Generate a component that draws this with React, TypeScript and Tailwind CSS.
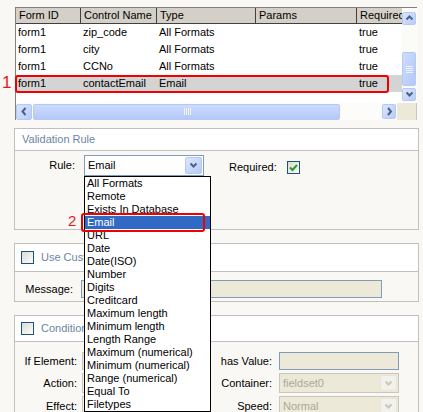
import React from "react";

const FONT = "font-['Liberation_Sans',Arial,sans-serif]";

type Dir = "up" | "down" | "left" | "right";

const chevrons: Record<Dir, string> = {
  up: "M1.5 5.5 L4.5 2.5 L7.5 5.5",
  down: "M1.5 2.5 L4.5 5.5 L7.5 2.5",
  left: "M5.5 1 L2.5 4.5 L5.5 8",
  right: "M3 1 L6 4.5 L3 8",
};

function Chevron({ dir, color = "#4d6185" }: { dir: Dir; color?: string }) {
  return (
    <svg width="9" height="9" viewBox="0 0 9 9">
      <path d={chevrons[dir]} fill="none" stroke={color} strokeWidth="2" />
    </svg>
  );
}

function ScrollButton({ dir, className = "" }: { dir: Dir; className?: string }) {
  return (
    <div
      className={`flex items-center justify-center rounded-[2px] border border-[#b6c8f3] bg-gradient-to-br from-[#dbe6fd] to-[#b8ccf8] ${className}`}
    >
      <Chevron dir={dir} />
    </div>
  );
}

function Grip({ vertical }: { vertical?: boolean }) {
  return (
    <div className={`flex ${vertical ? "flex-col gap-[1px]" : "gap-[1px]"}`}>
      {[0, 1, 2, 3].map((i) => (
        <div
          key={i}
          className={vertical ? "h-[1px] w-[7px] bg-[#eef3fe]" : "h-[7px] w-[1px] bg-[#eef3fe]"}
        />
      ))}
    </div>
  );
}

function Checkbox({ checked }: { checked?: boolean }) {
  return (
    <div className="flex h-[13px] w-[13px] items-center justify-center border border-[#1c5180] bg-gradient-to-br from-[#dcdcd7] to-[#fbfbf9]">
      {checked ? (
        <svg width="9" height="9" viewBox="0 0 9 9">
          <path d="M1 4.5 L3.5 7 L8 2" fill="none" stroke="#21a121" strokeWidth="2" />
        </svg>
      ) : null}
    </div>
  );
}

function ComboArrow({ disabled }: { disabled?: boolean }) {
  return (
    <div
      className={`flex w-[17px] items-center justify-center rounded-[2px] border ${
        disabled
          ? "border-[#e6e4dc] bg-[#f2f1ec]"
          : "border-[#b6c8f3] bg-gradient-to-br from-[#dbe6fd] to-[#b8ccf8]"
      }`}
    >
      <Chevron dir="down" color={disabled ? "#c9c7ba" : "#4d6185"} />
    </div>
  );
}

const columns = [
  { label: "Form ID", w: "w-[65px]" },
  { label: "Control Name", w: "w-[76px]" },
  { label: "Type", w: "w-[99px]" },
  { label: "Params", w: "w-[101px]" },
  { label: "Required", w: "w-[80px]" },
];

const rows = [
  ["form1", "zip_code", "All Formats", "", "true"],
  ["form1", "city", "All Formats", "", "true"],
  ["form1", "CCNo", "All Formats", "", "true"],
  ["form1", "contactEmail", "Email", "", "true"],
];

const rules = [
  "All Formats",
  "Remote",
  "Exists In Database",
  "Email",
  "URL",
  "Date",
  "Date(ISO)",
  "Number",
  "Digits",
  "Creditcard",
  "Maximum length",
  "Minimum length",
  "Length Range",
  "Maximum (numerical)",
  "Minimum (numerical)",
  "Range (numerical)",
  "Equal To",
  "Filetypes",
];

function Section({
  title,
  check,
  headerH,
  bodyH,
  children,
}: {
  title: string;
  check?: boolean;
  headerH: string;
  bodyH: string;
  children: React.ReactNode;
}) {
  return (
    <div className="ml-[14px] w-[405px] border border-[#c0c0c0]">
      <div className={`flex ${headerH} items-center border-b border-[#c0c0c0] bg-white ${check ? "pl-[6px]" : "pl-[7px]"}`}>
        {check ? (
          <div className="mr-[7px]">
            <Checkbox />
          </div>
        ) : null}
        <span className="text-[#6b84a6]">{title}</span>
      </div>
      <div className={bodyH}>{children}</div>
    </div>
  );
}

export default function App() {
  return (
    <div className={`relative h-[412px] w-[423px] overflow-hidden bg-[#f9f8f4] pt-[7px] text-[11px] text-black ${FONT}`}>
      {/* grid */}
      <div className="ml-[15px] w-[402px] border-l border-t border-[#808080] bg-white">
        <div className="flex h-[95px]">
          <div className="w-[386px] overflow-hidden">
            <div className="flex h-[16px] border-b border-[#404040] bg-[#d4d0c8]">
              {columns.map((c) => (
                <div
                  key={c.label}
                  className={`${c.w} shrink-0 overflow-hidden whitespace-nowrap border-r border-[#404040] pl-[3px] leading-[15px]`}
                >
                  {c.label}
                </div>
              ))}
            </div>
            {rows.map((r, i) => (
              <div key={i} className={`flex h-[17px] items-center ${i === 3 ? "bg-[#d4d4d4]" : ""}`}>
                {r.map((cell, j) => (
                  <div
                    key={j}
                    className={`${columns[j].w} shrink-0 overflow-hidden whitespace-nowrap pl-[2px]`}
                  >
                    {cell}
                  </div>
                ))}
              </div>
            ))}
          </div>
          {/* vertical scrollbar */}
          <div className="flex w-[15px] flex-col bg-[#fbfbf8] pt-[4px]">
            <ScrollButton dir="up" className="h-[13px] w-[14px]" />
            <div className="h-[27px]" />
            <div className="flex h-[34px] w-[14px] items-center justify-center rounded-[2px] border border-[#b6c8f3] bg-gradient-to-br from-[#cddcfd] to-[#b4c8f7]">
              <Grip vertical />
            </div>
            <div className="h-[2px]" />
            <ScrollButton dir="down" className="h-[13px] w-[14px]" />
          </div>
        </div>
        {/* horizontal scrollbar */}
        <div className="flex h-[17px] items-center bg-[#fcfcfa]">
          <ScrollButton dir="left" className="h-[16px] w-[16px]" />
          <div className="ml-[1px] flex h-[16px] w-[307px] items-center justify-end rounded-[2px] border border-[#b6c8f3] bg-gradient-to-b from-[#cddcfd] to-[#b4c8f7] pr-[148px]">
            <Grip />
          </div>
          <div className="w-[42px]" />
          <ScrollButton dir="right" className="h-[15px] w-[14px]" />
          <div className="ml-[1px] h-[17px] w-[20px] border-r border-[#c8c5bb] bg-[#ece9d8]" />
        </div>
      </div>

      {/* validation rule */}
      <div className="mt-[8px]">
        <Section title="Validation Rule" headerH="h-[22px]" bodyH="h-[78px]">
          <div className="flex items-center pt-[4px]">
            <div className="w-[60px] text-right">Rule:</div>
            <div className="ml-[9px] flex h-[21px] w-[120px] border border-[#7f9db9] bg-white p-[1px]">
              <div className="flex-1 pl-[2px] leading-[17px]">Email</div>
              <ComboArrow />
            </div>
            <div className="ml-[25px] mt-[4px]">Required:</div>
            <div className="ml-[10px] mt-[4px]">
              <Checkbox checked />
            </div>
          </div>
        </Section>
      </div>

      {/* custom message */}
      <div className="mt-[13px]">
        <Section title="Use Custom Message" check headerH="h-[28px]" bodyH="h-[29px]">
          <div className="flex items-center pt-[8px]">
            <div className="w-[58px] text-right">Message:</div>
            <div className="ml-[8px] h-[18px] w-[301px] border border-[#7f9db9] bg-[#ece9d8]" />
          </div>
        </Section>
      </div>

      {/* conditional */}
      <div className="mt-[13px]">
        <Section title="Conditional Validation" check headerH="h-[26px]" bodyH="h-[80px]">
          <div className="flex flex-col gap-[3px] pt-[10px]">
            <div className="flex h-[18px] items-center">
              <div className="w-[62px] text-right">If Element:</div>
              <div className="ml-[5px] h-[18px] w-[118px] border border-[#c9c7ba] bg-[#ece9d8]" />
              <div className="w-[72px] text-right">has Value:</div>
              <div className="ml-[7px] h-[18px] w-[120px] border border-[#7f9db9] bg-[#ece9d8]" />
            </div>
            <div className="flex h-[20px] items-center">
              <div className="w-[62px] text-right">Action:</div>
              <div className="ml-[5px] h-[20px] w-[118px] border border-[#c9c7ba] bg-[#f4f3ee]" />
              <div className="w-[72px] text-right">Container:</div>
              <div className="ml-[7px] flex h-[20px] w-[120px] border border-[#c9c7ba] bg-[#ece9d8] p-[1px]">
                <div className="flex-1 pl-[2px] leading-[16px] text-[#aca899]">fieldset0</div>
                <ComboArrow disabled />
              </div>
            </div>
            <div className="flex h-[20px] items-center">
              <div className="w-[62px] text-right">Effect:</div>
              <div className="ml-[5px] h-[20px] w-[118px] border border-[#c9c7ba] bg-[#f4f3ee]" />
              <div className="w-[72px] text-right">Speed:</div>
              <div className="ml-[7px] flex h-[20px] w-[120px] border border-[#c9c7ba] bg-[#ece9d8] p-[1px]">
                <div className="flex-1 pl-[2px] leading-[16px] text-[#aca899]">Normal</div>
                <ComboArrow disabled />
              </div>
            </div>
          </div>
        </Section>
      </div>

      {/* open dropdown list */}
      <div className="absolute left-[84px] top-[176px] w-[127px] border border-black bg-white">
        {rules.map((r) => (
          <div
            key={r}
            className={`h-[13px] whitespace-nowrap pl-[2px] leading-[13px] ${
              r === "Email" ? "bg-[#316ac5] text-white" : ""
            }`}
          >
            {r}
          </div>
        ))}
      </div>

      {/* annotations */}
      <div className="absolute left-[15px] top-[75px] h-[18px] w-[374px] rounded-[3px] border-2 border-[#f00000]" />
      <div className="absolute left-[2px] top-[74px] text-[17px] leading-[18px] text-[#e81818]">1</div>
      <div className="absolute left-[81px] top-[213px] h-[19px] w-[124px] rounded-[3px] border-2 border-[#f00000]" />
      <div className="absolute left-[68px] top-[213px] text-[15px] leading-[16px] text-[#e81818]">2</div>
    </div>
  );
}
